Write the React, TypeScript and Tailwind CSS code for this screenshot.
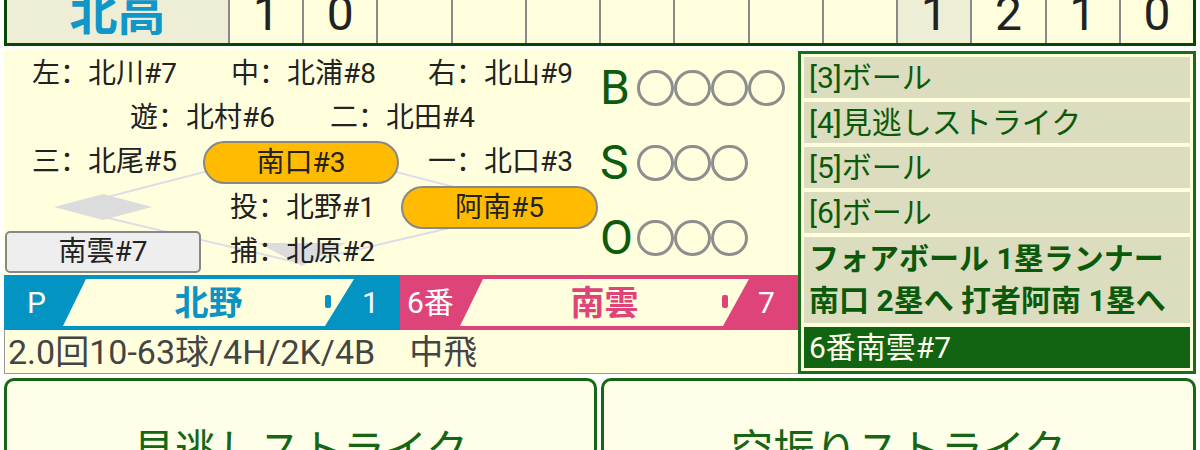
import React from "react";

const cells: { v: string; hl?: boolean }[] = [
  { v: "1" },
  { v: "0" },
  { v: "" },
  { v: "" },
  { v: "" },
  { v: "" },
  { v: "" },
  { v: "" },
  { v: "" },
  { v: "1", hl: true },
  { v: "2" },
  { v: "1" },
  { v: "0" },
];

const fielders: { t: string; x: number; cy: number }[] = [
  { t: "左：北川#7", x: 28, cy: 24 },
  { t: "中：北浦#8", x: 227, cy: 24 },
  { t: "右：北山#9", x: 424, cy: 24 },
  { t: "遊：北村#6", x: 126, cy: 68 },
  { t: "二：北田#4", x: 326, cy: 68 },
  { t: "三：北尾#5", x: 28, cy: 112 },
  { t: "一：北口#3", x: 424, cy: 112 },
  { t: "投：北野#1", x: 226, cy: 158 },
  { t: "捕：北原#2", x: 226, cy: 202 },
];

function Circle() {
  return <span className="block w-[37px] h-[36px] rounded-full border-[3px] border-[#8e8e8e]" />;
}

function BsoRow({ letter, n }: { letter: string; n: number }) {
  return (
    <div className="h-[75px] flex items-center">
      <span className="w-[37px] text-[48px] leading-none text-[#0e5a0e]">{letter}</span>
      {Array.from({ length: n }).map((_, i) => (
        <Circle key={i} />
      ))}
    </div>
  );
}

export default function App() {
  return (
    <div className="w-[1200px] h-[450px] overflow-hidden bg-white font-['Roboto','Noto_Sans_CJK_SC',sans-serif]">
      {/* Scoreboard */}
      <div className="mx-[4px] h-[46px] flex border-x-[3px] border-b-[3px] border-[#064806] bg-[#ffffdd] overflow-hidden">
        <div className="w-[221px] shrink-0 bg-[#eeeed6] flex items-end justify-center pb-[5px]">
          <span className="text-[48px] leading-none font-bold text-[#1097c9]">北高</span>
        </div>
        {cells.map((c, i) => (
          <div
            key={i}
            className={`flex-1 border-l-2 border-[#8a8a8a] flex items-end justify-center pb-[5px] ${c.hl ? "bg-[#eeeed6]" : ""}`}
          >
            <span className="text-[48px] leading-none text-[#222]">{c.v}</span>
          </div>
        ))}
      </div>

      {/* Main */}
      <div className="mt-[4px] ml-[4px] flex items-start">
        <div className="w-[794px] bg-[#ffffdd] flex flex-col">
          <div className="h-[225px] flex">
            {/* Field diagram */}
            <div className="relative w-[596px] h-[225px]">
              <svg className="absolute inset-0" width="596" height="225" viewBox="0 0 596 225">
                <polygon points="296,97 61,158 296,213 531,158" fill="none" stroke="#dcdde6" strokeWidth="2" />
                <polygon points="50,157 99,144 148,157 99,170" fill="#dcdcdc" />
                <polygon points="254,193 342,193 298,216" fill="#dcdcdc" />
              </svg>
              {fielders.map((f, i) => (
                <div
                  key={i}
                  className="absolute h-[44px] flex items-center text-[28px] leading-none text-[#222] whitespace-nowrap"
                  style={{ left: f.x, top: f.cy - 22 }}
                >
                  {f.t}
                </div>
              ))}
              <div className="absolute left-[199px] top-[91px] w-[196px] h-[43px] rounded-full border-2 border-[#888] bg-[#ffbb00] flex items-center justify-center text-[28px] leading-none text-[#222]">
                南口#3
              </div>
              <div className="absolute left-[397px] top-[136px] w-[197px] h-[43px] rounded-full border-2 border-[#888] bg-[#ffbb00] flex items-center justify-center text-[28px] leading-none text-[#222]">
                阿南#5
              </div>
              <div className="absolute left-[1px] top-[181px] w-[196px] h-[42px] rounded-[5px] border-2 border-[#888] bg-[#eeeeee] flex items-center justify-center text-[28px] leading-none text-[#222]">
                南雲#7
              </div>
            </div>
            {/* BSO */}
            <div className="w-[198px] flex flex-col">
              <BsoRow letter="B" n={4} />
              <BsoRow letter="S" n={3} />
              <BsoRow letter="O" n={3} />
            </div>
          </div>

          {/* Bars */}
          <div className="h-[55px] flex">
            <div className="w-[396px] bg-[#0494c4] py-[4px] flex">
              <div className="w-[59px] flex items-center pl-[23px] text-[30px] leading-none text-white">P</div>
              <div className="relative w-[291px] bg-[#ffffdd] [clip-path:polygon(23px_0,100%_0,262px_100%,0_100%)] flex items-center justify-center">
                <span className="text-[34px] leading-none font-bold text-[#0a93c3]">北野</span>
                <span className="absolute left-[262px] top-[16px] w-[6px] h-[13px] rounded-[2px] bg-[#0494c4]" />
              </div>
              <div className="flex-1 flex items-center pl-[8px] text-[30px] leading-none text-white">1</div>
            </div>
            <div className="w-[398px] bg-[#de4479] py-[4px] flex">
              <div className="w-[60px] flex items-center pl-[7px] text-[30px] leading-none text-white whitespace-nowrap">6番</div>
              <div className="relative w-[289px] bg-[#ffffdd] [clip-path:polygon(23px_0,100%_0,263px_100%,0_100%)] flex items-center justify-center">
                <span className="text-[34px] leading-none font-bold text-[#de4479]">南雲</span>
                <span className="absolute left-[262px] top-[16px] w-[6px] h-[13px] rounded-[2px] bg-[#de4479]" />
              </div>
              <div className="flex-1 flex items-center pl-[9px] text-[30px] leading-none text-white">7</div>
            </div>
          </div>

          {/* Status */}
          <div className="h-[44px] border-l border-b border-[#999] flex items-center pl-[3px] text-[34px] leading-none text-[#444] whitespace-nowrap">
            2.0回10-63球/4H/2K/4B　中飛
          </div>
        </div>

        {/* Log panel */}
        <div className="w-[398px] mt-[1px] border-[3px] border-[#1b6b1b] p-[3px] bg-[#ffffdd] flex flex-col gap-[4px] text-[30px] text-[#0b5a0b]">
          <div className="h-[41px] bg-[#dcdcbf] flex items-center pl-[5px] leading-none whitespace-nowrap">[3]ボール</div>
          <div className="h-[41px] bg-[#dcdcbf] flex items-center pl-[5px] leading-none whitespace-nowrap">[4]見逃しストライク</div>
          <div className="h-[41px] bg-[#dcdcbf] flex items-center pl-[5px] leading-none whitespace-nowrap">[5]ボール</div>
          <div className="h-[41px] bg-[#dcdcbf] flex items-center pl-[5px] leading-none whitespace-nowrap">[6]ボール</div>
          <div className="h-[86px] bg-[#dcdcbf] flex flex-col justify-center pl-[5px] leading-[42px] font-bold whitespace-nowrap">
            <span>フォアボール 1塁ランナー</span>
            <span>南口 2塁へ 打者阿南 1塁へ</span>
          </div>
          <div className="h-[41px] bg-[#116411] flex items-center pl-[5px] leading-none text-[#fffff0] whitespace-nowrap">6番南雲#7</div>
        </div>
      </div>

      {/* Buttons */}
      <div className="mt-[4px] mx-[4px] flex gap-[4px]">
        <div className="w-[593px] shrink-0 h-[145px] rounded-[10px] border-[3px] border-[#166616] bg-[#ffffe9] flex items-center justify-center text-[42px] leading-none text-[#166616]">
          見逃しストライク
        </div>
        <div className="flex-1 h-[145px] rounded-[10px] border-[3px] border-[#166616] bg-[#ffffe9] flex items-center justify-center text-[42px] leading-none text-[#166616]">
          空振りストライク
        </div>
      </div>
    </div>
  );
}
